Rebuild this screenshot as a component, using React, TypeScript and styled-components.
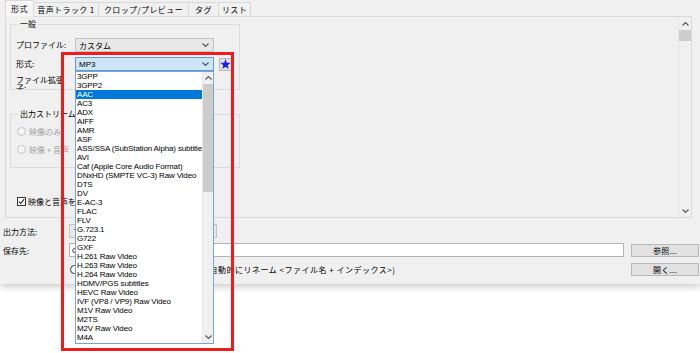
import React from "react";
import styled, { createGlobalStyle } from "styled-components";

const GlobalStyle = createGlobalStyle`
  html, body { margin: 0; padding: 0; background: #fff; }
  body {
    font-family: "Noto Sans CJK JP", "Noto Sans", sans-serif;
    font-size: 8px;
    color: #000;
  }
  * { box-sizing: border-box; }
`;

const Page = styled.div`
  position: relative;
  width: 700px;
  height: 353px;
  overflow: hidden;
  background: #fff;
`;

const Window = styled.div`
  height: 284px;
  background: #f0f0f0;
  box-shadow: 0 3px 7px rgba(0, 0, 0, 0.2);
  display: flex;
  flex-direction: column;
`;

const TabStrip = styled.div`
  position: relative;
  z-index: 1;
  display: flex;
  align-items: flex-end;
  height: 17px;
  padding-left: 5px;
`;

const Tab = styled.div<{ $active?: boolean; $w: number }>`
  width: ${(p) => p.$w}px;
  height: ${(p) => (p.$active ? 17 : 15)}px;
  margin-left: -1px;
  border: 1px solid #d9d9d9;
  border-bottom: ${(p) => (p.$active ? "1px solid #f0f0f0" : "1px solid #d9d9d9")};
  background: ${(p) => (p.$active ? "#f7f7f7" : "#f0f0f0")};
  display: flex;
  align-items: center;
  justify-content: center;
  font-size: 8px;
  letter-spacing: 0.4px;
  line-height: 1;
  white-space: nowrap;
  &:first-child { margin-left: 0; }
`;

const TabPane = styled.div`
  margin: -1px 8px 0 5px;
  height: 202px;
  border: 1px solid #d9d9d9;
  display: flex;
`;

const LeftColumn = styled.div`
  width: 234px;
  padding: 2px 0 0 4px;
  display: flex;
  flex-direction: column;
`;

const Group = styled.fieldset<{ $h: number; $mt?: number }>`
  margin: ${(p) => p.$mt ?? 0}px 0 0 0;
  height: ${(p) => p.$h}px;
  border: 1px solid #dcdcdc;
  padding: 0 5px;
  min-width: 0;
`;

const Legend = styled.legend`
  font-size: 8px;
  line-height: 10px;
  padding: 0 2px;
  margin-left: 2px;
`;

const GroupBody = styled.div<{ $pt: number; $gap: number }>`
  display: flex;
  flex-direction: column;
  padding-top: ${(p) => p.$pt}px;
  gap: ${(p) => p.$gap}px;
`;

const FieldRow = styled.div<{ $h?: number }>`
  display: flex;
  align-items: ${(p) => (p.$h ? "flex-start" : "center")};
  height: ${(p) => p.$h ?? 14}px;
  gap: 5px;
  overflow: hidden;
`;

const Label = styled.div`
  width: 54px;
  flex: none;
  line-height: 8px;
`;

const Combo = styled.div<{ $focus?: boolean; $w: number }>`
  width: ${(p) => p.$w}px;
  height: 14px;
  flex: none;
  border: 1px solid ${(p) => (p.$focus ? "#5a9be0" : "#c4c4c4")};
  background: ${(p) => (p.$focus ? "#cfe5f8" : "#e8e8e8")};
  display: flex;
  align-items: center;
  justify-content: space-between;
  padding: 0 4px 0 3px;
  font-size: 8px;
  white-space: nowrap;
  overflow: hidden;
`;

const LatinText = styled.span`
  font-family: "Liberation Sans", "Noto Sans", sans-serif;
  font-size: 8px;
`;

const TextBox = styled.div<{ $w?: number }>`
  width: ${(p) => (p.$w ? `${p.$w}px` : "100%")};
  height: 14px;
  flex: none;
  border: 1px solid #b4b4b4;
  background: #fff;
  display: flex;
  align-items: center;
  padding-left: 2px;
`;

const StarButton = styled.div`
  width: 13px;
  height: 13px;
  flex: none;
  border: 1px solid #b8b8b8;
  background: #e3e3e3;
  display: flex;
  align-items: center;
  justify-content: center;
`;

const RadioRow = styled.div<{ $disabled?: boolean }>`
  display: flex;
  align-items: center;
  gap: 3px;
  height: 10px;
  padding-left: 1px;
  color: ${(p) => (p.$disabled ? "#a3a3a3" : "#000")};
  white-space: nowrap;
`;

const RadioCircle = styled.span<{ $disabled?: boolean }>`
  width: 9px;
  height: 9px;
  flex: none;
  border-radius: 50%;
  border: 1px solid ${(p) => (p.$disabled ? "#c2c2c2" : "#333")};
  background: ${(p) => (p.$disabled ? "#f4f4f4" : "#fff")};
`;

const CheckRow = styled.div`
  display: flex;
  align-items: center;
  gap: 2px;
  height: 10px;
  margin-top: 28px;
  padding-left: 7px;
  white-space: nowrap;
`;

const CheckBox = styled.span`
  width: 9px;
  height: 9px;
  flex: none;
  border: 1px solid #333;
  background: #fff;
  display: flex;
  align-items: center;
  justify-content: center;
`;

const PaneFill = styled.div`
  flex: 1;
`;

const ScrollBar = styled.div<{ $w: number }>`
  width: ${(p) => p.$w}px;
  flex: none;
  display: flex;
  flex-direction: column;
  align-items: center;
  border-left: 1px solid #e8e8e8;
  background: #f0f0f0;
`;

const ArrowCell = styled.div<{ $h: number }>`
  height: ${(p) => p.$h}px;
  width: 100%;
  display: flex;
  align-items: center;
  justify-content: center;
  flex: none;
`;

const Thumb = styled.div<{ $h: number }>`
  height: ${(p) => p.$h}px;
  width: 100%;
  background: #cdcdcd;
  flex: none;
`;

const TrackFill = styled.div`
  flex: 1;
`;

const BottomForm = styled.div`
  display: grid;
  grid-template-columns: 59px 555px 68px;
  grid-auto-rows: 14px;
  column-gap: 7px;
  row-gap: 5px;
  align-items: center;
  padding: 0 8px 0 3px;
  margin-top: 6px;
`;

const FormLabel = styled.div`
  white-space: nowrap;
`;

const Button = styled.div`
  height: 13px;
  border: 1px solid #b8b8b8;
  background: #e1e1e1;
  display: flex;
  align-items: center;
  justify-content: center;
  font-size: 8px;
  letter-spacing: 0.3px;
`;

const RadioText = styled.span`
  white-space: pre;
  letter-spacing: 0.5px;
`;

const DropList = styled.div`
  position: absolute;
  left: 75px;
  top: 71px;
  width: 139px;
  height: 273px;
  border: 1px solid #7aa3d4;
  background: #fff;
  display: flex;
  z-index: 5;
`;

const Items = styled.div`
  flex: 1;
  display: flex;
  flex-direction: column;
`;

const Item = styled.div<{ $sel?: boolean }>`
  height: 9px;
  line-height: 9px;
  padding-left: 1px;
  font-family: "Liberation Sans", "Noto Sans", sans-serif;
  font-size: 8px;
  letter-spacing: -0.15px;
  white-space: nowrap;
  overflow: hidden;
  background: ${(p) => (p.$sel ? "#0078d7" : "transparent")};
  color: ${(p) => (p.$sel ? "#fff" : "#000")};
`;

const RedFrame = styled.div`
  position: absolute;
  left: 61px;
  top: 52px;
  width: 173px;
  height: 299px;
  border: 3px solid #ee1c1c;
  z-index: 10;
  pointer-events: none;
`;

const Chevron = ({ dir, color = "#555" }: { dir: "up" | "down"; color?: string }) => (
  <svg width="7" height="4" viewBox="0 0 7 4">
    <polyline
      points={dir === "down" ? "0.5,0.5 3.5,3.5 6.5,0.5" : "0.5,3.5 3.5,0.5 6.5,3.5"}
      fill="none"
      stroke={color}
      strokeWidth="1.1"
    />
  </svg>
);

const Star = () => (
  <svg width="11" height="11" viewBox="0 0 10 10">
    <polygon
      points="5,0 6.25,3.3 9.76,3.45 7,5.7 7.94,9.05 5,7.15 2.06,9.05 3,5.7 0.24,3.45 3.75,3.3"
      fill="#1d1de6"
    />
  </svg>
);

const Check = () => (
  <svg width="7" height="7" viewBox="0 0 7 7">
    <polyline points="0.8,3.6 2.7,5.5 6.2,1.2" fill="none" stroke="#222" strokeWidth="1.1" />
  </svg>
);

const tabs = [
  { label: "形式", w: 29, active: true },
  { label: "音声トラック 1", w: 66 },
  { label: "クロップ/プレビュー", w: 91 },
  { label: "タグ", w: 31 },
  { label: "リスト", w: 33 },
];

const formats = [
  "3GPP",
  "3GPP2",
  "AAC",
  "AC3",
  "ADX",
  "AIFF",
  "AMR",
  "ASF",
  "ASS/SSA (SubStation Alpha) subtitle",
  "AVI",
  "Caf (Apple Core Audio Format)",
  "DNxHD (SMPTE VC-3) Raw Video",
  "DTS",
  "DV",
  "E-AC-3",
  "FLAC",
  "FLV",
  "G.723.1",
  "G722",
  "GXF",
  "H.261 Raw Video",
  "H.263 Raw Video",
  "H.264 Raw Video",
  "HDMV/PGS subtitles",
  "HEVC Raw Video",
  "IVF (VP8 / VP9) Raw Video",
  "M1V Raw Video",
  "M2TS",
  "M2V Raw Video",
  "M4A",
];

export default function App() {
  return (
    <Page>
      <GlobalStyle />
      <Window>
        <TabStrip>
          {tabs.map((t) => (
            <Tab key={t.label} $w={t.w} $active={t.active}>
              {t.label}
            </Tab>
          ))}
        </TabStrip>
        <TabPane>
          <LeftColumn>
            <Group $h={71}>
              <Legend>一般</Legend>
              <GroupBody $pt={9} $gap={5}>
                <FieldRow>
                  <Label>プロファイル:</Label>
                  <Combo $w={139}>
                    <span>カスタム</span>
                    <Chevron dir="down" />
                  </Combo>
                </FieldRow>
                <FieldRow>
                  <Label>形式:</Label>
                  <Combo $w={139} $focus>
                    <LatinText>MP3</LatinText>
                    <Chevron dir="down" />
                  </Combo>
                  <StarButton>
                    <Star />
                  </StarButton>
                </FieldRow>
                <FieldRow $h={14}>
                  <Label>ファイル拡張子:</Label>
                  <TextBox $w={139}>
                    <LatinText>mp3</LatinText>
                  </TextBox>
                </FieldRow>
              </GroupBody>
            </Group>
            <Group $h={59} $mt={19}>
              <Legend>出力ストリーム設定</Legend>
              <GroupBody $pt={7} $gap={8}>
                <RadioRow $disabled>
                  <RadioCircle $disabled />
                  映像のみ
                </RadioRow>
                <RadioRow $disabled>
                  <RadioCircle $disabled />
                  映像 + 音声
                </RadioRow>
              </GroupBody>
            </Group>
            <CheckRow>
              <CheckBox>
                <Check />
              </CheckBox>
              映像と音声を同時に出力する
            </CheckRow>
          </LeftColumn>
          <PaneFill />
          <ScrollBar $w={13}>
            <ArrowCell $h={13}>
              <Chevron dir="up" />
            </ArrowCell>
            <Thumb $h={11} />
            <TrackFill />
            <ArrowCell $h={13}>
              <Chevron dir="down" />
            </ArrowCell>
          </ScrollBar>
        </TabPane>
        <BottomForm>
          <FormLabel>出力方法:</FormLabel>
          <Combo $w={148}>
            <span>ファイルに出力</span>
            <Chevron dir="down" />
          </Combo>
          <span />
          <FormLabel>保存先:</FormLabel>
          <TextBox>
            <LatinText>C:\Users\Output</LatinText>
          </TextBox>
          <Button>参照...</Button>
          <span />
          <RadioRow>
            <RadioCircle />
            <RadioText>{"上書きしない   同名ファイルは   (自動的にリネーム <ファイル名 + インデックス>)"}</RadioText>
          </RadioRow>
          <Button>開く...</Button>
        </BottomForm>
      </Window>
      <DropList>
        <Items>
          {formats.map((f) => (
            <Item key={f} $sel={f === "AAC"}>
              {f}
            </Item>
          ))}
        </Items>
        <ScrollBar $w={11}>
          <ArrowCell $h={12}>
            <Chevron dir="up" />
          </ArrowCell>
          <Thumb $h={108} />
          <TrackFill />
          <ArrowCell $h={12}>
            <Chevron dir="down" />
          </ArrowCell>
        </ScrollBar>
      </DropList>
      <RedFrame />
    </Page>
  );
}
